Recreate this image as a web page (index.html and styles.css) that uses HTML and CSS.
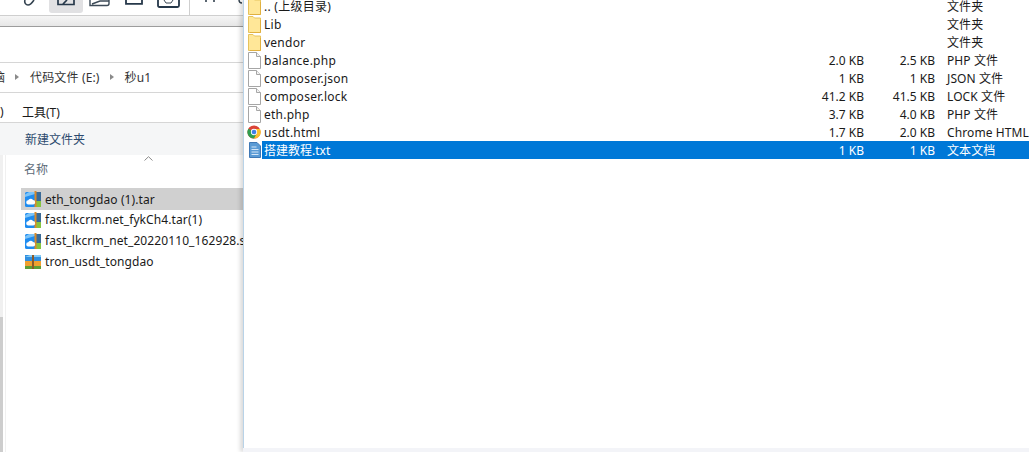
FILE: index.html
```html
<!DOCTYPE html>
<html lang="en">
<head>
    <meta charset="UTF-8">
    <title>秒u1</title>
    <link rel="stylesheet" href="styles.css">
</head>
<body>
<svg class="defs" width="0" height="0">
    <symbol id="i-folder" viewBox="0 0 14 17">
        <path d="M1.5 .5H6L7.5 2H13.5V16.5H1.5Z" fill="#ffe798" stroke="#e6c35c"/>
        <path d="M13.5 4V16.5H3" fill="none" stroke="#e0b040"/>
    </symbol>
    <symbol id="i-file" viewBox="-1 0 14 17">
        <path d="M.5 .5H8.5L12.5 4.5V16.5H.5Z" fill="#fff" stroke="#a6a6a6"/>
        <path d="M8.5 .5V4.5H12.5" fill="#f2f2f2" stroke="#a6a6a6"/>
    </symbol>
    <symbol id="i-chrome" viewBox="0 0 16 16">
        <circle cx="8" cy="8" r="7.5" fill="#db4437"/>
        <path d="M8 8 1.5 4.2A7.5 7.5 0 0 0 8 15.5L11.2 9.8Z" fill="#2f9e4f"/>
        <path d="M8 4.5H14.9A7.5 7.5 0 0 1 8 15.5L11.2 9.8Z" fill="#fbc02d"/>
        <circle cx="8" cy="8" r="3.6" fill="#fff"/>
        <circle cx="8" cy="8" r="2.7" fill="#3f7fe6"/>
    </symbol>
    <symbol id="i-txt" viewBox="-2 0 14 16">
        <path d="M.5 .5H8L11.5 4V15.5H.5Z" fill="#5b9bd5" stroke="#3f78b5"/>
        <path d="M2.5 5H7.5M2.5 7.5H9.5M2.5 10H9.5M2.5 12.5H9.5" stroke="#d5e6f7"/>
    </symbol>
    <symbol id="i-cloudzip" viewBox="0 0 16 16">
        <rect y="1" width="11" height="15" rx="1.5" fill="#1f8cf0"/>
        <path d="M0 3.5 4 1H10V3L0 6Z" fill="#7cc4f8"/>
        <rect x="11" y="1" width="5" height="9" fill="#3a6a96"/>
        <rect x="11" y="10" width="5" height="6" fill="#86c440"/>
        <rect x="9.5" y="0" width="2" height="16" fill="#d98a2b"/>
        <path d="M3.4 13.4A2.1 2.1 0 0 1 3.2 9.2 2.7 2.7 0 0 1 8 9 2.2 2.2 0 0 1 8 13.4Z" fill="#fff"/>
    </symbol>
    <symbol id="i-rar" viewBox="0 0 16 16">
        <rect y="1" width="16" height="6" fill="#2f8fe0"/>
        <path d="M0 3 5 1H16V3Z" fill="#86ccf6"/>
        <rect y="7" width="16" height="5" fill="#f0a030"/>
        <rect y="12" width="16" height="3" fill="#5f9e36"/>
        <rect x="7" y="1" width="2" height="14" fill="#8a5a2a"/>
    </symbol>
</svg>

<div class="desktop">
    <div class="explorer">
        <div class="toolbar">
            <svg class="tool tool-clip" width="12" height="6" viewBox="0 0 12 6"><path d="M2 0C1 3 3 5 5 5 7 5 9 3 11 0" fill="none" stroke="#33424f" stroke-width="1.6"/></svg>
            <div class="tool-active">
                <svg width="18" height="6" viewBox="0 0 18 6"><path d="M1 0V4.5H17V0M6 4 10 0" fill="none" stroke="#26384a" stroke-width="1.7"/></svg>
            </div>
            <svg class="tool tool-copy" width="21" height="7" viewBox="0 0 21 7"><path d="M1 0V5.5H18C19.5 5.5 20 5 20 3.5V0M3 4 11 1H20" fill="none" stroke="#3c4a57" stroke-width="1.4"/></svg>
            <svg class="tool tool-box" width="18" height="5" viewBox="0 0 18 5"><path d="M1 0V3.8H17V0" fill="none" stroke="#26384a" stroke-width="1.8"/></svg>
            <svg class="tool tool-shot" width="23" height="8" viewBox="0 0 23 8"><path d="M1 0V5.5Q1 7 2.5 7H20.5Q22 7 22 5.5V0" fill="none" stroke="#26384a" stroke-width="1.8"/><path d="M7 0 9 3H14L16 0" fill="none" stroke="#3c4a57"/></svg>
            <div class="tool-divider"></div>
            <svg class="tool tool-arrows" width="11" height="3" viewBox="0 0 11 3"><path d="M1 0V2M9 0V2" stroke="#33424f" stroke-width="1.6"/></svg>
            <svg class="tool tool-end" width="5" height="4" viewBox="0 0 5 4"><path d="M1 0C1 2 2 3 4 3" fill="none" stroke="#33424f" stroke-width="1.4"/></svg>
        </div>
        <div class="tab-strip"></div>
        <div class="title-gap"></div>
        <div class="address">
            <span class="crumb-cut">脑</span>
            <span class="crumb-sep"></span>
            <span class="crumb">代码文件 (E:)</span>
            <span class="crumb-sep"></span>
            <span class="crumb">秒u1</span>
        </div>
        <div class="menu">
            <span class="menu-cut">)</span>
            <span>工具(T)</span>
        </div>
        <div class="commands">新建文件夹</div>
        <div class="browse">
            <div class="scroll-track"><div class="scroll-thumb"></div></div>
            <div class="pane">
                <div class="col-head">
                    <span>名称</span>
                    <svg class="sort-mark" width="9" height="5" viewBox="0 0 9 5"><path d="M.5 4.5 4.5 .7 8.5 4.5" fill="none" stroke="#8a8a8a"/></svg>
                </div>
                <div class="file selected"><svg width="16" height="16"><use href="#i-cloudzip"/></svg><span>eth_tongdao (1).tar</span></div>
                <div class="file"><svg width="16" height="16"><use href="#i-cloudzip"/></svg><span>fast.lkcrm.net_fykCh4.tar(1)</span></div>
                <div class="file"><svg width="16" height="16"><use href="#i-cloudzip"/></svg><span>fast_lkcrm_net_20220110_162928.sql</span></div>
                <div class="file"><svg width="16" height="16"><use href="#i-rar"/></svg><span>tron_usdt_tongdao</span></div>
            </div>
        </div>
    </div>

    <div class="archive">
        <div class="rows">
            <div class="row"><svg class="ico" width="14" height="17"><use href="#i-folder"/></svg><div class="name">.. (上级目录)</div><div class="size"></div><div class="size"></div><div class="type">文件夹</div></div>
            <div class="row"><svg class="ico" width="14" height="17"><use href="#i-folder"/></svg><div class="name">Lib</div><div class="size"></div><div class="size"></div><div class="type">文件夹</div></div>
            <div class="row"><svg class="ico" width="14" height="17"><use href="#i-folder"/></svg><div class="name">vendor</div><div class="size"></div><div class="size"></div><div class="type">文件夹</div></div>
            <div class="row"><svg class="ico" width="14" height="17"><use href="#i-file"/></svg><div class="name">balance.php</div><div class="size">2.0 KB</div><div class="size">2.5 KB</div><div class="type">PHP 文件</div></div>
            <div class="row"><svg class="ico" width="14" height="17"><use href="#i-file"/></svg><div class="name">composer.json</div><div class="size">1 KB</div><div class="size">1 KB</div><div class="type">JSON 文件</div></div>
            <div class="row"><svg class="ico" width="14" height="17"><use href="#i-file"/></svg><div class="name">composer.lock</div><div class="size">41.2 KB</div><div class="size">41.5 KB</div><div class="type">LOCK 文件</div></div>
            <div class="row"><svg class="ico" width="14" height="17"><use href="#i-file"/></svg><div class="name">eth.php</div><div class="size">3.7 KB</div><div class="size">4.0 KB</div><div class="type">PHP 文件</div></div>
            <div class="row"><svg class="ico" width="14" height="14"><use href="#i-chrome"/></svg><div class="name">usdt.html</div><div class="size">1.7 KB</div><div class="size">2.0 KB</div><div class="type">Chrome HTML</div></div>
            <div class="row current"><svg class="ico" width="14" height="16"><use href="#i-txt"/></svg><div class="row-fill"><div class="name">搭建教程.txt</div><div class="size">1 KB</div><div class="size">1 KB</div><div class="type">文本文档</div></div></div>
        </div>
        <div class="archive-foot"></div>
    </div>
</div>
</body>
</html>
```

FILE: styles.css
```css
html, body {
    margin: 0;
    height: 100%;
    overflow: hidden;
    background: #fff;
}

body {
    font-family: "Noto Sans", "Noto Sans CJK SC", sans-serif;
    font-size: 12px;
    color: #1a1a1a;
}

.defs {
    display: block;
    height: 0;
}

.desktop {
    display: flex;
    width: 1029px;
    height: 452px;
}

/* left window */
.explorer {
    width: 243px;
    flex: none;
    display: flex;
    flex-direction: column;
    overflow: hidden;
}

.toolbar {
    height: 15px;
    flex: none;
    display: flex;
    align-items: flex-start;
    border-bottom: 1px solid #cfcfcf;
}

.tool {
    flex: none;
    display: block;
}

.tool-clip {
    margin-left: 23px;
}

.tool-active {
    flex: none;
    width: 34px;
    height: 13px;
    margin-left: 14px;
    background: #e1e1e3;
    border-radius: 0 0 3px 3px;
    display: flex;
    justify-content: center;
}

.tool-copy {
    margin-left: 6px;
}

.tool-box {
    margin-left: 15px;
}

.tool-shot {
    margin-left: 14px;
}

.tool-divider {
    width: 1px;
    height: 15px;
    margin-left: 9px;
    background: #cfcfcf;
}

.tool-arrows {
    margin-left: 15px;
}

.tool-end {
    margin-left: 22px;
}

.tab-strip {
    height: 10px;
    flex: none;
    background: linear-gradient(#f5f5f5, #e6e6e6);
    border-bottom: 1px solid #9c9c9c;
}

.title-gap {
    height: 35px;
    flex: none;
    border-bottom: 1px solid #d6d6d6;
}

.address {
    height: 27px;
    padding-bottom: 2px;
    flex: none;
    display: flex;
    align-items: center;
    border-bottom: 1px solid #d6d6d6;
    color: #333;
    white-space: nowrap;
}

.crumb-cut {
    margin-left: -7px;
}

.crumb {
    letter-spacing: .15px;
}

.crumb-sep {
    width: 0;
    height: 0;
    margin: 0 11px 0 10px;
    border-left: 4px solid #8a8a8a;
    border-top: 3px solid transparent;
    border-bottom: 3px solid transparent;
}

.menu {
    height: 21px;
    padding-top: 8px;
    flex: none;
    display: flex;
    align-items: center;
    gap: 17px;
    border-bottom: 1px solid #d6d6d6;
}

.menu-cut {
    width: 5px;
}

.commands {
    height: 32px;
    flex: none;
    padding-left: 25px;
    display: flex;
    align-items: center;
    background: #f5f6f7;
    color: #2c4a6e;
}

.browse {
    flex: 1;
    display: flex;
    min-height: 0;
}

.scroll-track {
    width: 3px;
    flex: none;
    background: #f0f0f0;
    display: flex;
    flex-direction: column;
    justify-content: flex-end;
    margin-right: 2px;
}

.scroll-thumb {
    height: 135px;
    background: #cdcdcd;
}

.pane {
    flex: 1;
    min-width: 0;
    border-left: 1px solid #f0f0f0;
    padding-left: 15px;
}

.col-head {
    height: 27px;
    padding: 0 0 6px 3px;
    display: flex;
    align-items: center;
    color: #5c6b78;
    position: relative;
}

.sort-mark {
    position: absolute;
    left: 123px;
    top: 1px;
}

.file {
    height: 21px;
    display: flex;
    align-items: center;
    gap: 4px;
    padding-left: 4px;
    white-space: nowrap;
    overflow: hidden;
    letter-spacing: .1px;
}

.file svg {
    flex: none;
}

.selected {
    height: 22px;
    margin-bottom: -1px;
    background: #d0d0d0;
}

/* right window */
.archive {
    flex: 1;
    min-width: 0;
    display: flex;
    flex-direction: column;
    position: relative;
    box-shadow: -3px 0 4px rgba(0, 0, 0, .14);
    background: #fff;
}

.rows {
    flex: 1;
    margin-top: -3px;
    padding-left: 3px;
    border-left: 1px solid #b9d3e8;
    overflow: hidden;
}

.row {
    height: 18px;
    display: flex;
    align-items: center;
    white-space: nowrap;
}

.ico {
    flex: none;
    width: 14px;
    margin-right: 1px;
}

.row-fill {
    flex: 1;
    height: 18px;
    display: flex;
    align-items: center;
    background: #0078d7;
    color: #fff;
}

.name {
    width: 540px;
    flex: none;
    padding-left: 2px;
    letter-spacing: .25px;
}

.row-fill .name {
    letter-spacing: 0;
}

.size {
    width: 60px;
    flex: none;
    text-align: right;
}

.size + .size {
    width: 71px;
}

.type {
    margin-left: 12px;
    letter-spacing: .1px;
}

.archive-foot {
    height: 4px;
    flex: none;
    background: #f3f4f8;
}
```
